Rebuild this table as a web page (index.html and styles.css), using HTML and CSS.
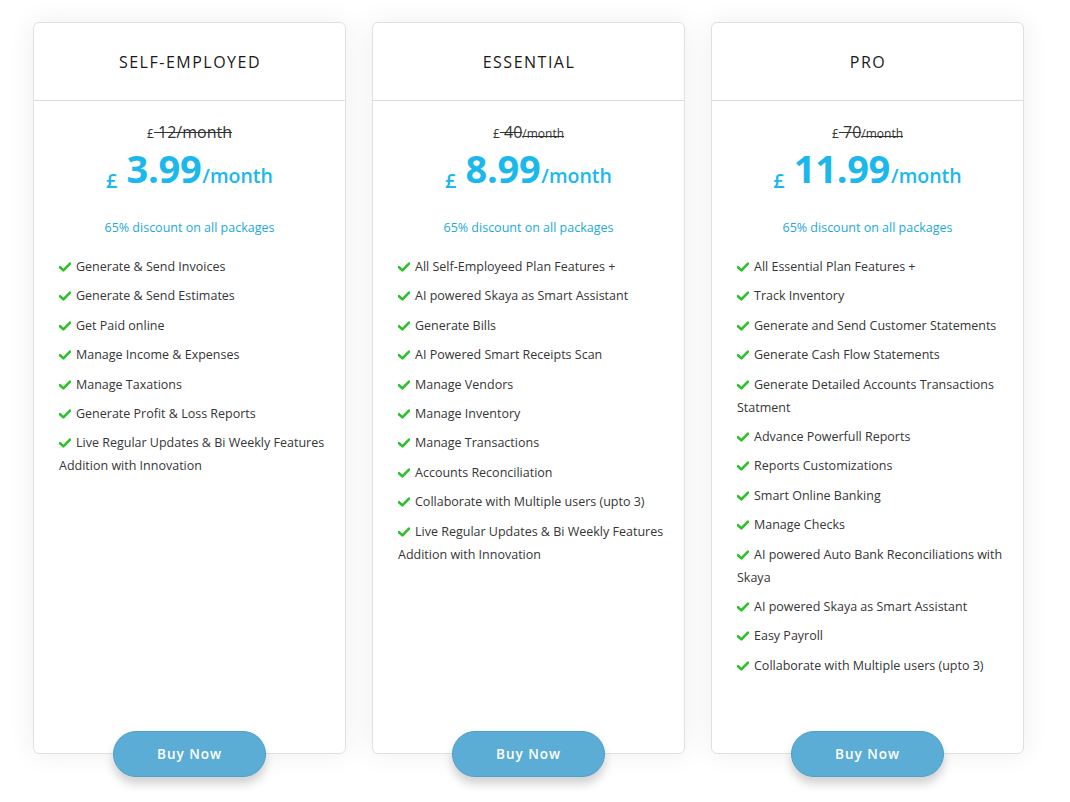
FILE: index.html
```html
<!DOCTYPE html>
<html>
<head>
<meta charset="utf-8">
<link rel="stylesheet" href="styles.css">
</head>
<body>
<div class="plans">
  <div class="card">
    <div class="card-head"><h2>SELF-EMPLOYED</h2></div>
    <div class="card-body">
      <div class="old"><span class="cur">£</span> 12/month</div>
      <div class="price"><span class="pcur">£</span><span class="amt">3.99</span><span class="per">/month</span></div>
      <div class="disc">65% discount on all packages</div>
      <ul class="feats">
        <li><svg class="chk" viewBox="0 0 12 10"><path d="M1 5.2 L4.4 8.4 L11 1.6" /></svg>Generate &amp; Send Invoices</li>
        <li><svg class="chk" viewBox="0 0 12 10"><path d="M1 5.2 L4.4 8.4 L11 1.6" /></svg>Generate &amp; Send Estimates</li>
        <li><svg class="chk" viewBox="0 0 12 10"><path d="M1 5.2 L4.4 8.4 L11 1.6" /></svg>Get Paid online</li>
        <li><svg class="chk" viewBox="0 0 12 10"><path d="M1 5.2 L4.4 8.4 L11 1.6" /></svg>Manage Income &amp; Expenses</li>
        <li><svg class="chk" viewBox="0 0 12 10"><path d="M1 5.2 L4.4 8.4 L11 1.6" /></svg>Manage Taxations</li>
        <li><svg class="chk" viewBox="0 0 12 10"><path d="M1 5.2 L4.4 8.4 L11 1.6" /></svg>Generate Profit &amp; Loss Reports</li>
        <li><svg class="chk" viewBox="0 0 12 10"><path d="M1 5.2 L4.4 8.4 L11 1.6" /></svg>Live Regular Updates &amp; Bi Weekly Features Addition with Innovation</li>
      </ul>
    </div>
    <button class="buy">Buy Now</button>
  </div>

  <div class="card">
    <div class="card-head"><h2>ESSENTIAL</h2></div>
    <div class="card-body">
      <div class="old"><span class="cur">£</span> 40<span class="small">/month</span></div>
      <div class="price"><span class="pcur">£</span><span class="amt">8.99</span><span class="per">/month</span></div>
      <div class="disc">65% discount on all packages</div>
      <ul class="feats">
        <li><svg class="chk" viewBox="0 0 12 10"><path d="M1 5.2 L4.4 8.4 L11 1.6" /></svg>All Self-Employeed Plan Features +</li>
        <li><svg class="chk" viewBox="0 0 12 10"><path d="M1 5.2 L4.4 8.4 L11 1.6" /></svg>AI powered Skaya as Smart Assistant</li>
        <li><svg class="chk" viewBox="0 0 12 10"><path d="M1 5.2 L4.4 8.4 L11 1.6" /></svg>Generate Bills</li>
        <li><svg class="chk" viewBox="0 0 12 10"><path d="M1 5.2 L4.4 8.4 L11 1.6" /></svg>AI Powered Smart Receipts Scan</li>
        <li><svg class="chk" viewBox="0 0 12 10"><path d="M1 5.2 L4.4 8.4 L11 1.6" /></svg>Manage Vendors</li>
        <li><svg class="chk" viewBox="0 0 12 10"><path d="M1 5.2 L4.4 8.4 L11 1.6" /></svg>Manage Inventory</li>
        <li><svg class="chk" viewBox="0 0 12 10"><path d="M1 5.2 L4.4 8.4 L11 1.6" /></svg>Manage Transactions</li>
        <li><svg class="chk" viewBox="0 0 12 10"><path d="M1 5.2 L4.4 8.4 L11 1.6" /></svg>Accounts Reconciliation</li>
        <li><svg class="chk" viewBox="0 0 12 10"><path d="M1 5.2 L4.4 8.4 L11 1.6" /></svg>Collaborate with Multiple users (upto 3)</li>
        <li><svg class="chk" viewBox="0 0 12 10"><path d="M1 5.2 L4.4 8.4 L11 1.6" /></svg>Live Regular Updates &amp; Bi Weekly Features Addition with Innovation</li>
      </ul>
    </div>
    <button class="buy">Buy Now</button>
  </div>

  <div class="card">
    <div class="card-head"><h2>PRO</h2></div>
    <div class="card-body">
      <div class="old"><span class="cur">£</span> 70<span class="small">/month</span></div>
      <div class="price"><span class="pcur">£</span><span class="amt">11.99</span><span class="per">/month</span></div>
      <div class="disc">65% discount on all packages</div>
      <ul class="feats">
        <li><svg class="chk" viewBox="0 0 12 10"><path d="M1 5.2 L4.4 8.4 L11 1.6" /></svg>All Essential Plan Features +</li>
        <li><svg class="chk" viewBox="0 0 12 10"><path d="M1 5.2 L4.4 8.4 L11 1.6" /></svg>Track Inventory</li>
        <li><svg class="chk" viewBox="0 0 12 10"><path d="M1 5.2 L4.4 8.4 L11 1.6" /></svg>Generate and Send Customer Statements</li>
        <li><svg class="chk" viewBox="0 0 12 10"><path d="M1 5.2 L4.4 8.4 L11 1.6" /></svg>Generate Cash Flow Statements</li>
        <li><svg class="chk" viewBox="0 0 12 10"><path d="M1 5.2 L4.4 8.4 L11 1.6" /></svg>Generate Detailed Accounts Transactions Statment</li>
        <li><svg class="chk" viewBox="0 0 12 10"><path d="M1 5.2 L4.4 8.4 L11 1.6" /></svg>Advance Powerfull Reports</li>
        <li><svg class="chk" viewBox="0 0 12 10"><path d="M1 5.2 L4.4 8.4 L11 1.6" /></svg>Reports Customizations</li>
        <li><svg class="chk" viewBox="0 0 12 10"><path d="M1 5.2 L4.4 8.4 L11 1.6" /></svg>Smart Online Banking</li>
        <li><svg class="chk" viewBox="0 0 12 10"><path d="M1 5.2 L4.4 8.4 L11 1.6" /></svg>Manage Checks</li>
        <li><svg class="chk" viewBox="0 0 12 10"><path d="M1 5.2 L4.4 8.4 L11 1.6" /></svg>AI powered Auto Bank Reconciliations with Skaya</li>
        <li><svg class="chk" viewBox="0 0 12 10"><path d="M1 5.2 L4.4 8.4 L11 1.6" /></svg>AI powered Skaya as Smart Assistant</li>
        <li><svg class="chk" viewBox="0 0 12 10"><path d="M1 5.2 L4.4 8.4 L11 1.6" /></svg>Easy Payroll</li>
        <li><svg class="chk" viewBox="0 0 12 10"><path d="M1 5.2 L4.4 8.4 L11 1.6" /></svg>Collaborate with Multiple users (upto 3)</li>
      </ul>
    </div>
    <button class="buy">Buy Now</button>
  </div>
</div>
</body>
</html>
```

FILE: styles.css
```css
* { box-sizing: border-box; }
html, body { margin: 0; padding: 0; background: #fff; }
body {
  font-family: "Open Sans", "Noto Sans", sans-serif;
  width: 1070px;
  height: 802px;
  overflow: hidden;
}
.plans {
  display: flex;
  gap: 26px;
  padding: 22px 0 0 33px;
}
.card {
  width: 313px;
  height: 732px;
  background: #fff;
  border: 1px solid #e0e0e0;
  border-radius: 6px;
  box-shadow: 0 0 28px rgba(0,0,0,0.07);
  display: flex;
  flex-direction: column;
}
.card-head {
  height: 78px;
  border-bottom: 1px solid #dcdcdc;
  display: flex;
  align-items: center;
  justify-content: center;
}
.card-head h2 {
  margin: 0;
  font-size: 16px;
  font-weight: 500;
  letter-spacing: 1.5px;
  color: #1a1a1a;
  padding-left: 1px;
}
.card-body {
  flex: 1;
  padding: 21px 0 0 0;
}
.old {
  text-align: center;
  font-size: 16px;
  line-height: 20px;
  color: #333;
  text-decoration: line-through;
  text-decoration-thickness: 1px;
}
.old .cur { font-size: 12px; text-decoration: none; display: inline-block; }
.old .small { font-size: 12px; }
.price {
  text-align: center;
  color: #1ab8ec;
  line-height: 40px;
  margin-top: 5px;
  white-space: nowrap;
}
.pcur {
  font-size: 20px;
  font-weight: 600;
  position: relative;
  top: 5px;
  margin-right: 9px;
}
.amt {
  display: inline-block;
  font-size: 38px;
  line-height: 38px;
  font-weight: 700;
  letter-spacing: -0.3px;
}
.per {
  font-size: 19.5px;
  font-weight: 600;
  margin-left: 1px;
}
.disc {
  text-align: center;
  color: #1ca9da;
  font-size: 12.5px;
  line-height: 18px;
  margin-top: 22px;
}
.feats {
  list-style: none;
  margin: 18px 0 0 0;
  padding: 0 20px 0 25px;
  font-size: 12.5px;
  line-height: 23px;
  color: #363636;
}
.feats li { margin-bottom: 6.4px; }
.chk {
  width: 12px;
  height: 10px;
  margin-right: 5px;
  vertical-align: -1px;
}
.chk path {
  fill: none;
  stroke: #2cc12c;
  stroke-width: 2.6;
  stroke-linecap: round;
  stroke-linejoin: round;
}
.buy {
  align-self: center;
  width: 153px;
  height: 46px;
  margin-bottom: -24px;
  border: 1px solid #4f9fc8;
  border-radius: 23px;
  background: #5badd6;
  color: #fff;
  font-family: "Open Sans", sans-serif;
  font-size: 13.5px;
  font-weight: 600;
  letter-spacing: 1px;
  box-shadow: 0 7px 10px rgba(0,0,0,0.18);
  cursor: pointer;
}
```
